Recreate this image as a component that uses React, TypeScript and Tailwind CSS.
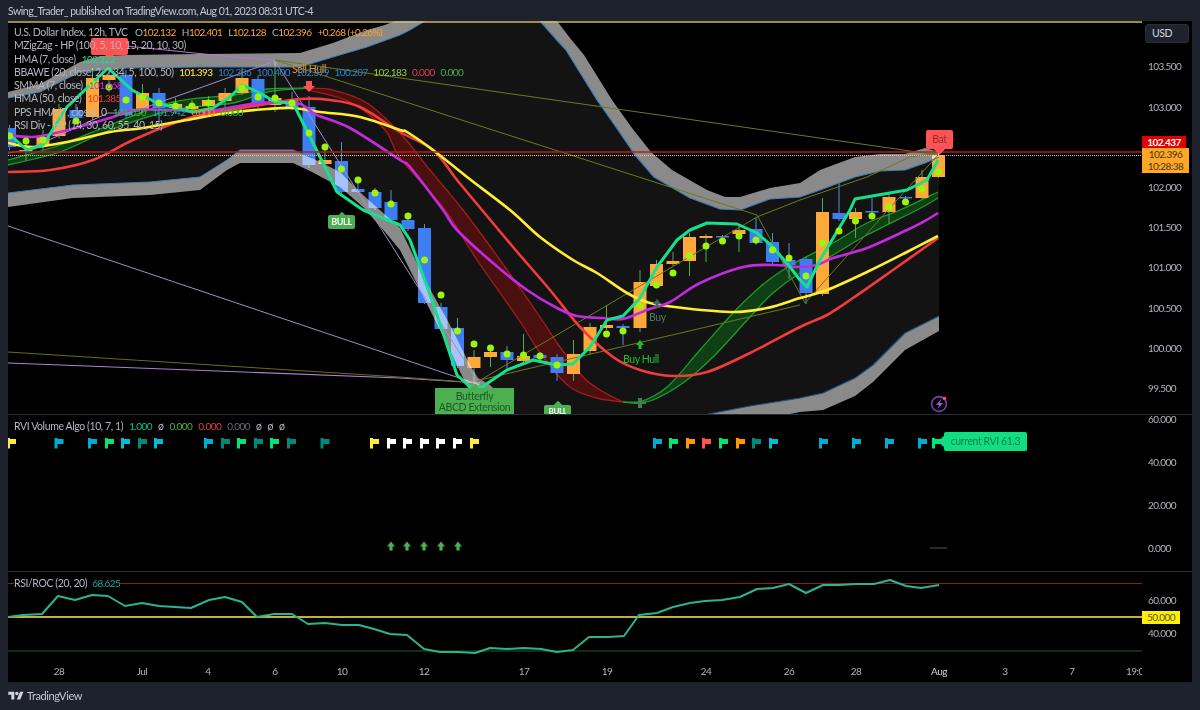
const font = { fontFamily: '"Lato", "Liberation Sans", sans-serif' };
const NUM = "text-[10px] tracking-[-0.55px]";

type Pt = [number, number];
const pts = (list: Pt[]) => list.map((p) => p.join(",")).join(" ");
const rev = (list: Pt[]) => [...list].reverse();

// catmull-rom through the points, for the moving averages
const curve = (list: Pt[]) => {
  let d = "";
  for (let i = 0; i < list.length - 1; i++) {
    const p0 = list[i - 1] ?? list[i];
    const p1 = list[i];
    const p2 = list[i + 1];
    const p3 = list[i + 2] ?? p2;
    const c1x = p1[0] + (p2[0] - p0[0]) / 6;
    const c1y = p1[1] + (p2[1] - p0[1]) / 6;
    const c2x = p2[0] - (p3[0] - p1[0]) / 6;
    const c2y = p2[1] - (p3[1] - p1[1]) / 6;
    d += ` C${c1x.toFixed(1)} ${c1y.toFixed(1)} ${c2x.toFixed(1)} ${c2y.toFixed(1)} ${p2[0]} ${p2[1]}`;
  }
  return d;
};
const smooth = (list: Pt[]) => `M${list[0][0]} ${list[0][1]}${curve(list)}`;
const ribbon = (up: Pt[], low: Pt[]) => {
  const back = rev(low);
  return `${smooth(up)} L${back[0][0]} ${back[0][1]}${curve(back)} Z`;
};

// candles: x, body top, body bottom, wick top, wick bottom, colour, signal dot y
type Candle = [number, number, number, number, number, "b" | "o", number?];
const CANDLES: Candle[] = [
  [9.5, 128, 147, 125, 150, "b", 136],
  [26, 150, 151, 143, 161, "o", 141],
  [43, 137, 145, 130, 150, "o", 140],
  [59, 109, 136, 104, 138, "o"],
  [76, 110, 118, 104, 122, "b", 121],
  [92.5, 78, 117, 68, 120, "o", 84],
  [109, 75, 80, 68, 92, "o", 87],
  [126, 75, 115, 70, 118, "b", 100],
  [142.5, 93, 110, 84, 113, "o", 97],
  [159, 93, 108, 88, 123, "b", 103],
  [175.5, 104, 108, 98, 114, "o", 106],
  [192, 106, 109, 100, 114, "o", 106],
  [208.5, 100, 106, 96, 112, "o", 103],
  [225, 93, 101, 88, 112, "o"],
  [242, 78, 93, 68, 95, "o", 88],
  [258, 79, 105, 76, 108, "b", 97],
  [275, 98, 105, 60, 112, "o", 98],
  [292, 100, 107, 92, 110, "b", 103],
  [309, 107, 165, 96, 168, "b", 133],
  [325, 160, 164, 147, 165, "o", 147],
  [341.5, 161, 192, 142, 193, "b", 169],
  [358, 189, 192, 180, 193, "b", 180],
  [375, 192, 208, 188, 210, "b", 193],
  [391, 202, 220, 190, 222, "b", 204],
  [408, 220, 229, 214, 231, "b", 216],
  [424.5, 228, 303, 224, 304, "b", 260],
  [441, 307, 329, 303, 331, "b", 295],
  [457.5, 328, 366, 318, 368, "b", 331],
  [474, 357, 368, 350, 388, "o", 344],
  [490.5, 352, 357, 345, 367, "o", 348],
  [507, 352, 360, 346, 368, "b", 354],
  [523.5, 356, 361, 334, 365, "o", 355],
  [540, 355, 358, 352, 360, "b", 356],
  [557, 357, 373, 354, 381, "b", 365],
  [573.5, 354, 374, 340, 381, "o"],
  [590, 327, 351, 323, 355, "o"],
  [606.5, 325, 328, 305, 330, "o", 334],
  [623, 326, 328, 324, 345, "b", 331],
  [640, 282, 328, 270, 332, "o", 306],
  [656.5, 264, 286, 260, 288, "o", 285],
  [673, 261, 264, 252, 266, "o", 273],
  [689.5, 237, 261, 233, 276, "o", 256],
  [706, 236, 238, 234, 262, "o", 246],
  [722.5, 236, 237, 235, 240, "b", 241],
  [739, 230, 234, 226, 252, "o", 236],
  [756, 229, 243, 217, 245, "b", 240],
  [772.5, 242, 262, 233, 264, "b", 250],
  [789, 260, 265, 243, 279, "b", 258],
  [806, 259, 293, 257, 304, "b", 276],
  [822.5, 212, 294, 198, 296, "o", 243],
  [839, 213, 219, 183, 221, "b", 231],
  [855.5, 212, 219, 208, 238, "o", 221],
  [872, 211, 212, 198, 214, "b", 216],
  [889, 197, 212, 192, 224, "o", 207],
  [905.5, 197, 198, 196, 200, "b", 202],
  [922, 177, 198, 170, 199, "o", 189],
  [938.5, 155, 177, 152, 178, "o", 172],
];

const UPPER_OUT: Pt[] = [[8, 92], [40, 84], [80, 62], [100, 56], [127, 55], [200, 54], [300, 53], [333, 43], [367, 30], [385, 25], [395, 21]];
const UPPER_IN: Pt[] = [[8, 98], [40, 92], [80, 72], [127, 68], [200, 67], [300, 67], [333, 57], [367, 47], [400, 35], [410, 30], [425, 21]];
const RIGHT_OUT: Pt[] = [[557, 21], [570, 38], [584, 55], [612, 100], [632, 128], [651, 152], [672, 170], [707, 190], [725, 197], [740, 197], [770, 188], [800, 183], [820, 170], [855, 157], [880, 154], [905, 154], [925, 148], [939, 152]];
const RIGHT_IN: Pt[] = [[540, 21], [555, 38], [566, 50], [597, 100], [618, 130], [635, 155], [654, 177], [690, 198], [720, 209], [740, 210], [770, 199], [800, 197], [820, 190], [855, 177], [880, 171], [905, 170], [925, 163], [939, 157]];
const LOW_TOP: Pt[] = [[8, 193], [73, 185], [150, 182], [200, 177], [227, 160], [240, 150], [293, 150], [312, 158], [340, 172], [363, 195], [400, 228], [425, 280], [450, 325], [470, 365], [478, 378], [490, 385], [505, 400], [512, 414]];
const LOW_BOT: Pt[] = [[8, 207], [73, 198], [150, 195], [200, 190], [227, 170], [240, 163], [293, 163], [312, 172], [340, 187], [363, 207], [385, 232], [400, 250], [425, 300], [450, 350], [463, 378], [470, 392], [478, 405], [484, 414]];
const LOW2_TOP: Pt[] = [[708, 414], [750, 406], [800, 398], [823, 393], [855, 378], [873, 365], [905, 333], [939, 316]];
const LOW2_BOT: Pt[] = [[790, 414], [800, 412], [823, 410], [855, 396], [873, 382], [905, 350], [939, 331]];

const HULL: Pt[] = [[8, 133], [27, 150], [43, 145], [67, 107], [108, 68], [132, 90], [157, 103], [177, 108], [193, 112], [213, 108], [230, 97], [242, 85], [260, 93], [275, 102], [293, 103], [308, 133], [323, 163], [337, 192], [363, 210], [400, 225], [410, 240], [433, 303], [457, 375], [470, 387], [482, 387], [507, 370], [533, 360], [557, 365], [573, 364], [590, 347], [607, 320], [623, 316], [640, 298], [657, 267], [677, 240], [690, 230], [707, 223], [737, 224], [757, 233], [773, 247], [790, 267], [800, 280], [807, 287], [820, 260], [850, 210], [855, 199], [907, 190], [927, 180], [938, 160]];
const SMMA: Pt[] = [[8, 135], [33, 137], [60, 132], [113, 117], [133, 110], [173, 110], [200, 112], [227, 108], [260, 103], [297, 103], [317, 115], [350, 128], [400, 160], [410, 167], [443, 210], [457, 230], [493, 263], [527, 290], [557, 308], [577, 316], [603, 318], [623, 319], [647, 310], [670, 302], [700, 283], [743, 267], [773, 265], [800, 267], [817, 265], [833, 258], [867, 248], [907, 230], [923, 222], [938, 213]];
const HMA50: Pt[] = [[8, 143], [33, 147], [67, 142], [110, 132], [143, 128], [187, 120], [227, 113], [267, 109], [293, 108], [320, 112], [360, 117], [400, 130], [407, 132], [433, 150], [467, 177], [510, 210], [540, 237], [573, 260], [597, 273], [627, 293], [650, 303], [683, 308], [733, 312], [767, 308], [800, 298], [827, 290], [867, 272], [907, 252], [938, 236]];
const RED: Pt[] = [[8, 172], [50, 170], [93, 160], [133, 140], [183, 120], [217, 112], [260, 105], [300, 99], [330, 100], [360, 107], [400, 132], [433, 150], [457, 180], [482, 210], [513, 247], [550, 290], [580, 327], [613, 357], [640, 370], [673, 376], [707, 372], [750, 353], [800, 327], [827, 315], [853, 298], [893, 270], [938, 238]];
const RED_UP: Pt[] = [[308, 88], [333, 90], [367, 103], [400, 133], [430, 170], [463, 210], [500, 260], [540, 317], [560, 347], [583, 377], [600, 390], [623, 402]];
const RED_LOW: Pt[] = [[308, 90], [350, 102], [385, 130], [400, 158], [445, 210], [477, 260], [517, 317], [543, 357], [570, 387], [597, 398], [623, 402]];
const GREEN_UP: Pt[] = [[623, 402], [640, 402], [667, 387], [700, 350], [733, 313], [760, 287], [783, 270], [800, 260], [833, 243], [867, 223], [900, 210], [938, 192]];
const GREEN_LOW: Pt[] = [[623, 402], [640, 402], [653, 400], [683, 383], [713, 357], [750, 317], [773, 293], [800, 273], [833, 255], [867, 235], [917, 210], [938, 198]];
const GREEN2_UP: Pt[] = [[8, 160], [60, 145], [110, 125], [173, 102], [233, 95], [267, 89], [308, 88]];
const GREEN2_LOW: Pt[] = [[8, 165], [60, 152], [110, 130], [173, 110], [233, 103], [267, 92], [308, 88]];

const RSI: Pt[] = [[8, 617], [23, 615], [42, 614], [58, 596], [75, 600], [92, 595], [108, 596], [125, 606], [142, 603], [159, 606], [175, 607], [191, 608], [209, 600], [225, 597], [242, 602], [257, 617], [274, 614], [292, 614], [308, 624], [325, 623], [342, 625], [359, 625], [374, 629], [390, 634], [407, 635], [424, 649], [440, 652], [458, 652], [475, 653], [490, 648], [507, 649], [524, 648], [541, 649], [557, 652], [573, 650], [589, 637], [608, 637], [624, 636], [639, 615], [657, 613], [673, 607], [690, 603], [705, 601], [722, 600], [740, 597], [757, 589], [773, 588], [789, 584], [806, 593], [823, 585], [839, 585], [856, 584], [874, 584], [890, 580], [906, 586], [921, 588], [939, 585]];

const FLAGS: [number, string][] = [
  [11, "#ffeb3b"], [58.5, "#00acd1"], [92, "#00acd1"], [109, "#00e676"], [125, "#00bcd4"], [142, "#00897b"], [158, "#00bcd4"],
  [208, "#00acd1"], [225, "#00897b"], [241, "#00e676"], [258, "#00897b"], [274, "#00e676"], [291, "#00897b"], [324.5, "#00897b"],
  [374, "#ffeb3b"], [391, "#ffffff"], [407, "#ffffff"], [424, "#ffffff"], [440, "#ffffff"], [457, "#ffffff"], [474, "#ffeb3b"],
  [657, "#00acd1"], [673, "#00e676"], [690, "#ff9800"], [706, "#ff5252"], [723, "#00e676"], [740, "#ff9800"], [756, "#00897b"], [773, "#00bcd4"],
  [823, "#00acd1"], [856, "#00acd1"], [889, "#00acd1"], [922, "#00acd1"], [936, "#00e676"],
];

const UP_ARROWS = [391, 407, 424, 441, 458];

const PRICE_LABELS: [string, number][] = [
  ["103.500", 45], ["103.000", 86], ["102.000", 166], ["101.500", 206], ["101.000", 246], ["100.500", 287], ["100.000", 327], ["99.500", 367],
];
const RVI_LABELS: [string, number][] = [["60.000", 4], ["40.000", 47], ["20.000", 90], ["0.000", 133]];
const RSI_LABELS: [string, number][] = [["60.000", 28], ["40.000", 61]];
const DATES: [string, number][] = [
  ["28", 59], ["Jul", 142], ["4", 208], ["6", 275], ["10", 342], ["12", 424], ["17", 524], ["19", 607],
  ["24", 706], ["26", 789], ["28", 856], ["Aug", 939], ["3", 1005], ["7", 1072],
];

function Line({ data, color, width = 2.6 }: { data: Pt[]; color: string; width?: number }) {
  return <polyline points={pts(data)} fill="none" stroke={color} strokeWidth={width} strokeLinejoin="round" />;
}

function Smooth({ data, color, width = 2.6 }: { data: Pt[]; color: string; width?: number }) {
  return <path d={smooth(data)} fill="none" stroke={color} strokeWidth={width} strokeLinejoin="round" />;
}

function UpArrow({ x, y, color }: { x: number; y: number; color: string }) {
  return <polygon points={`${x},${y - 5} ${x + 4},${y} ${x + 1.6},${y} ${x + 1.6},${y + 4} ${x - 1.6},${y + 4} ${x - 1.6},${y} ${x - 4},${y}`} fill={color} />;
}

function MainChart() {
  return (
    <svg className="absolute inset-0" width={1134} height={393} viewBox="8 21 1134 393">
      <polygon
        points={pts([...UPPER_IN, ...RIGHT_IN, [939, 316], ...rev(LOW2_TOP).slice(1), ...rev(LOW_TOP)])}
        fill="#131313"
      />
      <polyline points="8,226 480,385" stroke="#a58cc8" strokeWidth={1} fill="none" />
      <polyline points="8,363 400,378 480,383" stroke="#b07fd0" strokeWidth={1.2} fill="none" />
      <polyline points="8,352 400,377 480,383" stroke="#6b6a14" strokeWidth={1} fill="none" />

      <path d={ribbon(RED_UP, RED_LOW)} fill="#4a1010" />
      <Smooth data={RED_UP} color="#a61c1c" width={1.3} />
      <Smooth data={RED_LOW} color="#a61c1c" width={1.3} />
      <path d={ribbon(GREEN_UP, GREEN_LOW)} fill="#0f3f14" />
      <Smooth data={GREEN_UP} color="#1f9a2b" width={1.3} />
      <Smooth data={GREEN_LOW} color="#1f9a2b" width={1.3} />
      <path d={ribbon(GREEN2_UP, GREEN2_LOW)} fill="#0f3f14" />
      <Smooth data={GREEN2_UP} color="#1f9a2b" width={1.3} />
      <Smooth data={GREEN2_LOW} color="#1f9a2b" width={1.3} />

      {CANDLES.map(([x, top, bot, wt, wb, c]) => (
        <g key={x}>
          <line x1={x} x2={x} y1={wt} y2={wb} stroke={c === "b" ? "#5b8fd0" : "#4caf50"} strokeWidth={1} />
          <rect x={x - 6.5} y={top} width={13} height={Math.max(bot - top, 1.5)} fill={c === "b" ? "#3d7ff2" : "#ffa93a"} />
        </g>
      ))}

      <g className="mix-blend-screen" fill="#8a8a8a">
        <polygon points={pts([...UPPER_OUT, ...rev(UPPER_IN)])} />
        <polygon points={pts([...RIGHT_OUT, ...rev(RIGHT_IN)])} />
        <polygon points={pts([...LOW_TOP, ...rev(LOW_BOT)])} />
        <polygon points={pts([...LOW2_TOP, ...rev(LOW2_BOT)])} />
      </g>
      <Line data={UPPER_IN} color="#3f7fb5" width={1} />
      <Line data={RIGHT_IN} color="#3f7fb5" width={1.2} />
      <Line data={LOW2_TOP} color="#1f4f73" width={1.2} />
      <Line data={LOW_TOP.slice(0, 8)} color="#3f7fb5" width={1} />

      <polyline points="8,153 27,150 108,113 130,113 275,61 480,385" stroke="#a58cc8" strokeWidth={1} fill="none" />
      <polyline points="117,45 233,57 275,60" stroke="#b873d8" strokeWidth={1.2} fill="none" />
      <polyline points="275,60 938,155" stroke="#6b7a1e" strokeWidth={1} fill="none" />
      <polyline points="275,60 757,215 805,303 888,210 938,155" stroke="#6b7a1e" strokeWidth={1} fill="none" />
      <polyline points="477,382 757,217 800,200 867,177 910,157 938,153" stroke="#6b7a1e" strokeWidth={1} fill="none" />
      <polyline points="480,380 800,305" stroke="#6b7a1e" strokeWidth={1} fill="none" />

      <Smooth data={RED} color="#f23b3b" />
      <Smooth data={HMA50} color="#ffee33" />
      <Smooth data={SMMA} color="#c42be0" />
      <Line data={HULL} color="#16e08a" width={3} />

      {CANDLES.filter((c) => c[6] !== undefined).map((c) => (
        <circle key={c[0]} cx={c[0]} cy={c[6]} r={3.5} fill="#9cf50c" />
      ))}

      <line x1={8} x2={1142} y1={152} y2={152} stroke="#b71c1c" strokeWidth={1.4} />
      <line x1={8} x2={1142} y1={155.5} y2={155.5} stroke="#d8c8a0" strokeWidth={1} strokeDasharray="1 1" />
      <line x1={8} x2={1142} y1={22} y2={22} stroke="#c8b96c" strokeWidth={1.6} />

      <UpArrow x={657} y={304} color="#3f6b5c" />
      <UpArrow x={640} y={345} color="#1fbf2f" />
      <polygon points="306,81 312,81 312,86 315,86 309,92 303,86 306,86" fill="#ff5252" />
      <polygon points="634,402 638,402 638,398 642,398 642,402 646,402 646,404 642,404 642,408 638,408 638,404 634,404" fill="#3f7f4c" />

      <circle cx={939} cy={404} r={7.4} fill="none" stroke="#7b3fb0" strokeWidth={1.6} />
      <path d="M942 398.5 l-6 6.5 h3.4 l-2.4 4.5 l6 -6.5 h-3.4 z" fill="#a35ee0" />
      <circle cx={944.5} cy={398.5} r={1.8} fill="#ff4a68" />
    </svg>
  );
}

function Legend() {
  return (
    <div className="absolute left-[6px] top-[5px] flex flex-col leading-[13.3px] whitespace-nowrap">
      <div className="flex">
        <span className="w-[121px]">U.S. Dollar Index, 12h, TVC</span>
        <span className={`flex gap-[6px] text-[#ffa726] ${NUM}`}>
          <span><span className="text-[#b2b5be]">O</span>102.132</span>
          <span><span className="text-[#b2b5be]">H</span>102.401</span>
          <span><span className="text-[#b2b5be]">L</span>102.128</span>
          <span><span className="text-[#b2b5be]">C</span>102.396</span>
          <span>+0.268 (+0.26%)</span>
        </span>
      </div>
      <div>MZigZag - HP (100, 5, 10, 15, 20, 10, 30)</div>
      <div className="flex gap-[6px]">
        <span>HMA (7, close)</span>
        <span className={`text-[#16e08a] ${NUM}`}>102.322</span>
      </div>
      <div className="flex gap-[5.5px]">
        <span>BBAWE (20, close, 2, 2.34, 5, 100, 50)</span>
        <span className={`text-[#ffee33] ${NUM}`}>101.393</span>
        <span className={`text-[#2f80c8] ${NUM}`}>102.386</span>
        <span className={`text-[#2f80c8] ${NUM}`}>100.400</span>
        <span className={`text-[#2f80c8] ${NUM}`}>102.379</span>
        <span className={`text-[#2f80c8] ${NUM}`}>100.207</span>
        <span className={`text-[#8bd435] ${NUM}`}>102.183</span>
        <span className={`text-[#d9424a] ${NUM}`}>0.000</span>
        <span className={`text-[#4caf50] ${NUM}`}>0.000</span>
      </div>
      <div className="flex gap-[6px]">
        <span>SMMA (7, close)</span>
        <span className={`text-[#c42be0] ${NUM}`}>101.668</span>
      </div>
      <div className="flex gap-[6px]">
        <span>HMA (50, close)</span>
        <span className={`text-[#f23b3b] ${NUM}`}>101.385</span>
      </div>
      <div className="flex gap-[6px]">
        <span>PPS HMA (7, close)</span>
        <span>0</span>
        <span className={`text-[#2fc43a] ${NUM}`}>101.050</span>
        <span className={`text-[#26a69a] ${NUM}`}>101.942</span>
        <span className={`text-[#f09020] ${NUM}`}>0.000</span>
        <span className={`text-[#2fc43a] ${NUM}`}>0.000</span>
      </div>
      <div>RSI Div - HP (14, 30, 60, 55, 40, 15)</div>
    </div>
  );
}

function ChartLabels() {
  return (
    <>
      <div className="absolute left-[83px] top-[17px] flex h-[17px] w-[37px] items-center justify-center rounded-[2px] bg-[#ff5252]">
        <span className="absolute -bottom-[3px] h-[7px] w-[7px] rotate-45 bg-[#ff5252]" />
      </div>
      <div className="absolute left-[284px] top-[41px] text-[#f09020]">Sell Hull</div>
      <div className="absolute left-[320px] top-[194px] flex h-[14px] w-[27px] items-center justify-center rounded-[2px] bg-[#4caf50] text-[9px] font-bold text-white">
        <span className="absolute -top-[2px] h-[6px] w-[6px] rotate-45 bg-[#4caf50]" />
        <span className="relative">BULL</span>
      </div>
      <div className="absolute left-[536px] top-[384px] flex h-[9px] w-[27px] items-start justify-center overflow-visible rounded-t-[2px] bg-[#4caf50] text-[8px] leading-[9px] font-bold text-white">
        <span className="absolute -top-[3px] h-[6px] w-[6px] rotate-45 bg-[#4caf50]" />
        <span className="relative mt-[2px] h-[7px] overflow-hidden">BULL</span>
      </div>
      <div className="absolute left-[427px] top-[367px] flex h-[26px] w-[79px] flex-col items-center bg-[#4caf50] leading-[11px] text-[#1d5a27]">
        <span className="absolute -top-[3px] h-[7px] w-[7px] rotate-45 bg-[#4caf50]" />
        <span className="relative mt-[3px]">Butterfly</span>
        <span className="relative whitespace-nowrap">ABCD Extension</span>
      </div>
      <div className="absolute left-[918px] top-[109px] flex h-[19px] w-[27px] items-center justify-center rounded-[2px] bg-[#ff5252] text-[#9a2b37]">
        <span className="absolute -bottom-[4px] h-[9px] w-[9px] rotate-45 bg-[#ff5252]" />
        <span className="relative">Bat</span>
      </div>
      <div className="absolute left-[641px] top-[289px] text-[#4e7a58]">Buy</div>
      <div className="absolute left-[615px] top-[331px] text-[#1fbf2f]">Buy Hull</div>
    </>
  );
}

function AxisLabels({ labels }: { labels: [string, number][] }) {
  return (
    <>
      {labels.map(([text, y]) => (
        <span key={text} className={`absolute left-[6px] -translate-y-1/2 text-[#b2b5be] ${NUM}`} style={{ top: y }}>
          {text}
        </span>
      ))}
    </>
  );
}

export default function App() {
  return (
    <div className="flex h-[710px] w-[1200px] flex-col overflow-hidden bg-[#1e222d] text-[10.5px] tracking-[-0.4px] text-[#b2b5be]" style={font}>
      <div className="flex h-[21px] shrink-0 items-center px-2 pt-[2px] tracking-[-0.5px] text-[#c4c7cf]">
        Swing_Trader_ published on TradingView.com, Aug 01, 2023 08:31 UTC-4
      </div>

      <div className="mx-2 flex flex-col bg-black">
        {/* price pane */}
        <div className="flex h-[394px] border-b border-[#2a2e39]">
          <div className="relative w-[1134px] overflow-hidden">
            <MainChart />
            <ChartLabels />
            <Legend />
          </div>
          <div className="relative flex-1">
            <div className="absolute left-[3px] top-[3px] flex h-[19px] w-[44px] items-center rounded-[3px] border border-[#2a2e39] bg-[#1e222d] pl-[6px] text-[#d1d4dc]">
              USD
            </div>
            <AxisLabels labels={PRICE_LABELS} />
            <div className={`absolute left-0 top-[115px] flex h-[12px] w-[44px] items-center justify-center bg-[#e00000] font-bold text-white ${NUM}`}>
              102.437
            </div>
            <div className={`absolute left-0 top-[127px] flex h-[25px] w-[47px] flex-col items-center justify-center bg-[#ffa726] leading-[11.5px] text-[#4a3410] ${NUM}`}>
              <span>102.396</span>
              <span>10:28:38</span>
            </div>
          </div>
        </div>

        {/* rvi pane */}
        <div className="flex h-[157px] border-b border-[#2a2e39]">
          <div className="relative w-[1134px] overflow-hidden">
            <svg className="absolute inset-0" width={1134} height={156} viewBox="8 415 1134 156">
              {FLAGS.map(([x, color]) => (
                <path key={x} d={`M${x - 4} 438 h3 v1 h6 v5 h-6 v4.5 h-3 z`} fill={color} />
              ))}
              {UP_ARROWS.map((x) => (
                <UpArrow key={x} x={x} y={546.5} color="#4caf50" />
              ))}
              <line x1={930} x2={947} y1={548} y2={548} stroke="#555" strokeWidth={1} />
            </svg>
            <div className="absolute left-[6px] top-[5px] flex gap-[6px] leading-[13px] whitespace-nowrap">
              <span>RVI Volume Algo (10, 7, 1)</span>
              <span className={`text-[#00c48c] ${NUM}`}>1.000</span>
              <span>ø</span>
              <span className={`text-[#4caf50] ${NUM}`}>0.000</span>
              <span className={`text-[#d9424a] ${NUM}`}>0.000</span>
              <span className={`text-[#666a73] ${NUM}`}>0.000</span>
              <span>ø</span>
              <span>ø</span>
              <span>ø</span>
            </div>
            <div className="absolute left-[936px] top-[17px] flex h-[19px] w-[83px] items-center justify-center rounded-[2px] bg-[#0fe07f] whitespace-nowrap text-[#17794f]">
              <span className="absolute -left-[4px] h-[9px] w-[9px] rotate-45 bg-[#0fe07f]" />
              <span className="relative">current RVI 61.3</span>
            </div>
          </div>
          <div className="relative flex-1">
            <AxisLabels labels={RVI_LABELS} />
          </div>
        </div>

        {/* rsi pane */}
        <div className="flex h-[88px]">
          <div className="relative w-[1134px] overflow-hidden">
            <svg className="absolute inset-0" width={1134} height={88} viewBox="8 572 1134 88">
              <line x1={8} x2={1142} y1={583.5} y2={583.5} stroke="#8a1c1c" strokeWidth={1} />
              <line x1={8} x2={1142} y1={651} y2={651} stroke="#1b5e20" strokeWidth={1} />
              <line x1={8} x2={1142} y1={617} y2={617} stroke="#ffee58" strokeWidth={1.6} />
              <Line data={RSI} color="#2bb392" width={2} />
            </svg>
            <div className="absolute left-[6px] top-[5px] flex gap-[5px] bg-black leading-[13px] whitespace-nowrap">
              <span>RSI/ROC (20, 20)</span>
              <span className={`text-[#26a69a] ${NUM}`}>68.625</span>
            </div>
          </div>
          <div className="relative flex-1">
            <AxisLabels labels={RSI_LABELS} />
            <div className={`absolute left-0 top-[39px] flex h-[13px] w-[38px] items-center justify-center bg-[#ffee00] text-[#5a5a10] ${NUM}`}>
              50.000
            </div>
          </div>
        </div>

        {/* time axis */}
        <div className="flex h-[22px]">
          <div className={`relative w-[1134px] overflow-hidden ${NUM}`}>
            {DATES.map(([text, x]) => (
              <span
                key={x}
                className={`absolute top-[4px] -translate-x-1/2 ${text === "Aug" ? "text-[#d1d4dc]" : ""}`}
                style={{ left: x - 8 }}
              >
                {text}
              </span>
            ))}
            <span className="absolute right-0 top-[4px] w-[16px] overflow-hidden whitespace-nowrap">19:00</span>
          </div>
        </div>
      </div>

      {/* footer */}
      <div className="flex flex-1 items-center gap-[3px] px-2 text-[11px] text-[#c4c7cf]">
        <svg width={16} height={12} viewBox="0 0 36 28" fill="#d1d4dc">
          <path d="M14 22H7V11H0V4h14v18zM28 22h-8l7.5-18h8L28 22z" />
          <circle cx={20} cy={8} r={4} />
        </svg>
        TradingView
      </div>
    </div>
  );
}
